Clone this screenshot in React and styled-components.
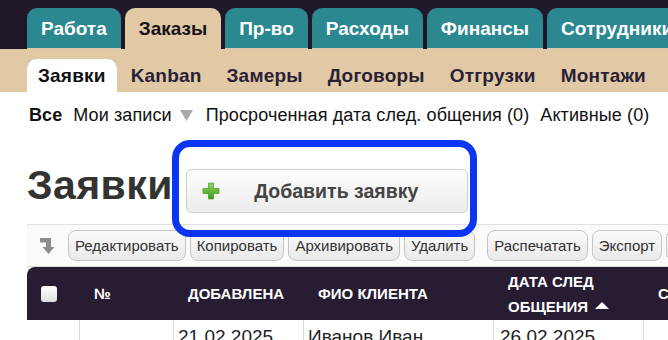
import React from 'react';
import styled, { createGlobalStyle } from 'styled-components';

const Global = createGlobalStyle`
  html, body {
    margin: 0;
    padding: 0;
    background: #fff;
    overflow: hidden;
  }
  body {
    font-family: "Liberation Sans", Arial, Helvetica, sans-serif;
    color: #222;
  }
`;

const mainTabs = ['Работа', 'Заказы', 'Пр-во', 'Расходы', 'Финансы', 'Сотрудники'];
const subTabs = ['Заявки', 'Kanban', 'Замеры', 'Договоры', 'Отгрузки', 'Монтажи'];
const actions = [
  { label: 'Редактировать' },
  { label: 'Копировать' },
  { label: 'Архивировать' },
  { label: 'Удалить', gapAfter: true },
  { label: 'Распечатать' },
  { label: 'Экспорт' },
  { label: 'Настройки' },
];

function SortIcon() {
  return (
    <svg width="15" height="16" viewBox="0 0 15 16">
      <path d="M0 0H11V9H14.5L8.5 16L2.5 9H6V4.5H0Z" fill="#8c8c8c" />
    </svg>
  );
}

function PlusIcon() {
  return (
    <svg width="18" height="18" viewBox="0 0 18 18">
      <defs>
        <linearGradient id="pl" x1="0" y1="0" x2="0" y2="1">
          <stop offset="0" stopColor="#8fd85a" />
          <stop offset="1" stopColor="#3f9a1c" />
        </linearGradient>
      </defs>
      <path
        d="M6.5 1H11.5V6.5H17V11.5H11.5V17H6.5V11.5H1V6.5H6.5Z"
        fill="url(#pl)"
        stroke="#3a8a1a"
        strokeWidth="0.6"
      />
    </svg>
  );
}

function DownTriangle() {
  return (
    <svg width="13" height="11" viewBox="0 0 13 11">
      <path d="M0 0H13L6.5 11Z" fill="#a9a9a9" />
    </svg>
  );
}

export default function App() {
  return (
    <>
      <Global />
      <Page>
        <TopBar>
          {mainTabs.map((t) => (
            <MainTab key={t} $active={t === 'Заказы'}>{t}</MainTab>
          ))}
        </TopBar>
        <SubBar>
          {subTabs.map((t) => (
            <SubTab key={t} $active={t === 'Заявки'}>{t}</SubTab>
          ))}
        </SubBar>

        <Content>
          <Filters>
            <FilterItem $bold>Все</FilterItem>
            <FilterItem>Мои записи</FilterItem>
            <Arrow>
              <DownTriangle />
            </Arrow>
            <FilterItem>Просроченная дата след. общения (0)</FilterItem>
            <FilterItem>Активные (0)</FilterItem>
          </Filters>

          <HeadRow>
            <Title>Заявки</Title>
            <AddWrap>
              <AddButton>
                <PlusIcon />
                <AddLabel>Добавить заявку</AddLabel>
              </AddButton>
              <Highlight />
            </AddWrap>
          </HeadRow>

          <Toolbar>
            <SortSlot>
              <SortIcon />
            </SortSlot>
            {actions.map((a) => (
              <ToolButton key={a.label} $gapAfter={a.gapAfter}>{a.label}</ToolButton>
            ))}
          </Toolbar>

          <Grid>
            <HeadCell>
              <CheckBox />
            </HeadCell>
            <HeadCell>№</HeadCell>
            <HeadCell>ДОБАВЛЕНА</HeadCell>
            <HeadCell>ФИО КЛИЕНТА</HeadCell>
            <HeadCell $twoLine>
              <span>ДАТА СЛЕД</span>
              <span>
                ОБЩЕНИЯ <SortUp />
              </span>
            </HeadCell>
            <HeadCell>СТАТУС</HeadCell>

            <BodyCell />
            <BodyCell />
            <BodyCell>21.02.2025</BodyCell>
            <BodyCell>Иванов Иван</BodyCell>
            <BodyCell $pad={6}>26.02.2025</BodyCell>
            <BodyCell />
          </Grid>
        </Content>
      </Page>
    </>
  );
}

const Page = styled.div`
  width: 668px;
  height: 340px;
  overflow: hidden;
`;

const TopBar = styled.div`
  display: flex;
  gap: 4px;
  height: 49px;
  padding: 8px 0 0 27px;
  box-sizing: border-box;
  background: #201828;
  align-items: flex-end;
`;

const MainTab = styled.div`
  flex-shrink: 0;
  height: 41px;
  padding: 0 14px;
  display: flex;
  align-items: center;
  border-radius: 10px 10px 0 0;
  font-size: 19px;
  font-weight: 700;
  white-space: nowrap;
  background: ${(p) => (p.$active ? '#e1c9a5' : '#2b8890')};
  color: ${(p) => (p.$active ? '#161219' : '#fff')};
  box-shadow: ${(p) => (p.$active ? 'none' : 'inset 0 -1px 0 #d8c7ab')};
`;

const SubBar = styled.div`
  display: flex;
  align-items: flex-end;
  gap: 3px;
  height: 43px;
  padding-left: 27px;
  background: #e1c9a5;
`;

const SubTab = styled.div`
  flex-shrink: 0;
  height: 33px;
  padding: 0 11px;
  display: flex;
  align-items: center;
  border-radius: 10px 10px 0 0;
  font-size: 19px;
  font-weight: 700;
  letter-spacing: 0.2px;
  white-space: nowrap;
  background: ${(p) => (p.$active ? '#fff' : 'transparent')};
  color: ${(p) => (p.$active ? '#111' : '#2a1f36')};
`;

const Content = styled.div`
  padding-left: 27px;
`;

const Filters = styled.div`
  display: flex;
  align-items: center;
  gap: 11px;
  height: 22px;
  margin-top: 12px;
  padding-left: 2px;
  white-space: nowrap;
`;

const Arrow = styled.span`
  display: flex;
  margin: 0 2px 0 -3px;
`;

const FilterItem = styled.span`
  font-size: 18px;
  letter-spacing: 0.1px;
  font-weight: ${(p) => (p.$bold ? 700 : 400)};
  color: #111;
`;

const HeadRow = styled.div`
  display: flex;
  align-items: center;
  height: 44px;
  margin-top: 43px;
`;

const Title = styled.h1`
  margin: 0 13px 12px 0;
  font-size: 41px;
  line-height: 41px;
  letter-spacing: 0.4px;
  font-weight: 700;
  color: #333;
`;

const AddWrap = styled.div`
  position: relative;
`;

const AddButton = styled.div`
  width: 282px;
  height: 44px;
  box-sizing: border-box;
  display: flex;
  align-items: center;
  padding-left: 15px;
  border: 1px solid #cfcfcf;
  border-radius: 5px;
  background: linear-gradient(#fdfdfd, #ececec);
`;

const AddLabel = styled.span`
  flex: 1;
  text-align: center;
  padding-right: 14px;
  font-size: 19.5px;
  font-weight: 700;
  color: #444;
`;

const Highlight = styled.div`
  position: absolute;
  left: -14px;
  right: -9px;
  top: -29px;
  bottom: -24px;
  border: 7px solid #0a35f2;
  border-radius: 18px;
  z-index: 5;
  pointer-events: none;
`;

const Toolbar = styled.div`
  display: flex;
  align-items: center;
  gap: 4px;
  height: 43px;
  margin-top: 11px;
  box-sizing: border-box;
  border-top: 1px solid #e0e0e0;
  border-bottom: 1px solid #dcdcdc;
  background: #fafafa;
  white-space: nowrap;
`;

const SortSlot = styled.div`
  display: flex;
  width: 37px;
  padding-left: 13px;
  box-sizing: border-box;
  flex-shrink: 0;
`;

const ToolButton = styled.div`
  flex-shrink: 0;
  height: 31px;
  box-sizing: border-box;
  display: flex;
  align-items: center;
  padding: 0 6px;
  margin-right: ${(p) => (p.$gapAfter ? '8px' : '0')};
  border: 1px solid #c4c4c4;
  border-radius: 8px;
  background: linear-gradient(#fbfbfb, #e9e9e9);
  font-size: 15px;
  color: #333;
`;

const Grid = styled.div`
  display: grid;
  grid-template-columns: 53px 94px 130px 190px 150px 150px;
  width: 767px;
`;

const HeadCell = styled.div`
  height: 53px;
  box-sizing: border-box;
  padding-left: 14px;
  display: flex;
  flex-direction: ${(p) => (p.$twoLine ? 'column' : 'row')};
  justify-content: ${(p) => (p.$twoLine ? 'center' : 'flex-start')};
  align-items: ${(p) => (p.$twoLine ? 'flex-start' : 'center')};
  background: #281c33;
  color: #fff;
  font-size: 15px;
  font-weight: 700;
  line-height: 25px;
  white-space: nowrap;

  &:first-child {
    border-top-left-radius: 8px;
  }
`;

const CheckBox = styled.div`
  width: 16px;
  height: 16px;
  border-radius: 3px;
  background: linear-gradient(#ffffff, #dedede);
`;

const SortUp = styled.span`
  display: inline-block;
  width: 0;
  height: 0;
  margin-left: 3px;
  vertical-align: 3px;
  border-left: 7px solid transparent;
  border-right: 7px solid transparent;
  border-bottom: 7px solid #fff;
`;

const BodyCell = styled.div`
  height: 40px;
  box-sizing: border-box;
  padding: 6px ${(p) => p.$pad || 4}px 0;
  border-right: 1px solid #dedede;
  font-size: 19px;
  color: #222;
  white-space: nowrap;

  &:first-child {
    border-left: 1px solid #dedede;
  }
`;
